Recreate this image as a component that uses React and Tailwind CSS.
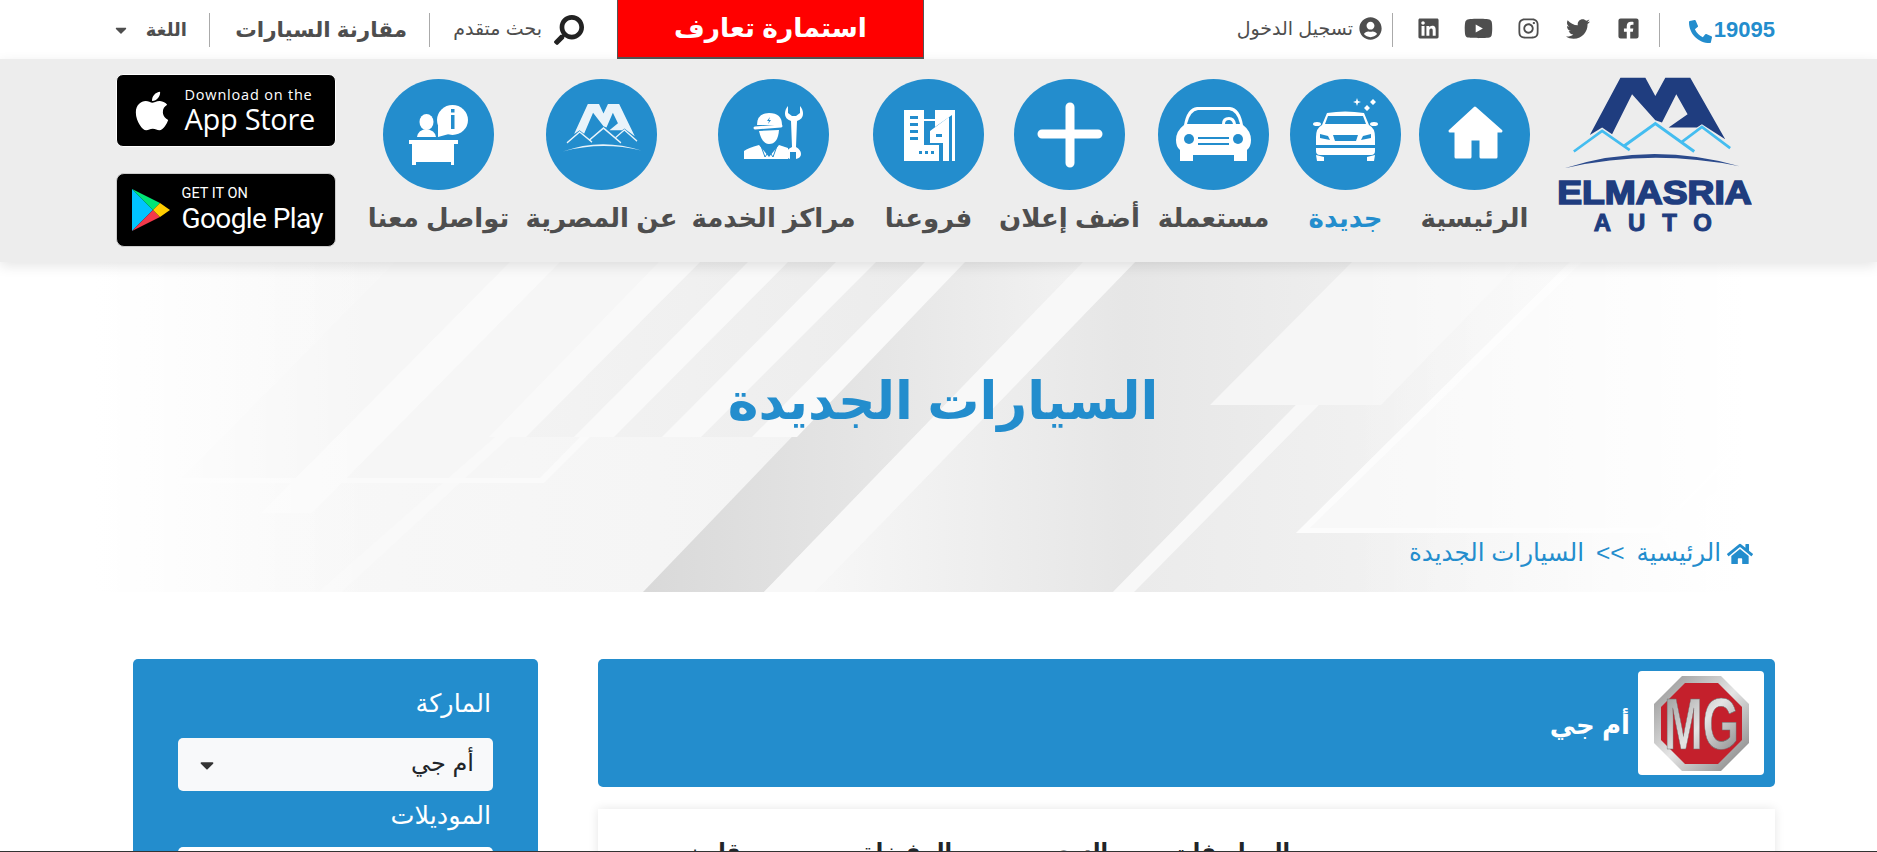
import React from 'react';
import {
  FaApple,
  FaCaretDown,
  FaFacebookSquare,
  FaHome,
  FaInstagram,
  FaLinkedin,
  FaPhoneAlt,
  FaSearch,
  FaTwitter,
  FaUserCircle,
  FaYoutube,
} from 'react-icons/fa';

const BLUE = '#238dcd';

const LogoMark = ({ dark = '#1f3d7f', light = '#44bdf0', arc = '#2b4a8c' }) => (
  <>
    <polygon
      fill={dark}
      points="148,222 240,50 315,50 345,105 375,50 450,50 555,235 485,190 470,200 385,200 442,160 408,100 365,185 345,178 275,100 215,220 185,200"
    />
    <polyline fill="none" stroke={light} strokeWidth="8" points="100,272 185,210 268,268" />
    <polyline fill="none" stroke={light} strokeWidth="9" points="250,256 345,188 462,272" />
    <polyline fill="none" stroke={light} strokeWidth="8" points="425,243 485,198 570,262" />
    <path fill={arc} d="M72 322 Q330 240 598 316 Q330 262 72 322Z" />
  </>
);

const Logo = () => (
  <svg viewBox="50 45 585 475" className="w-[195px] h-[158px]">
    <LogoMark />
    <text direction="ltr" x="50" y="430" textLength="585" lengthAdjust="spacingAndGlyphs" fontFamily="Liberation Sans" fontWeight="700" fontSize="102" fill="#1f3d7f" stroke="#1f3d7f" strokeWidth="5">ELMASRIA</text>
    <text direction="ltr" x="160" y="512" textLength="355" fontFamily="Liberation Sans" fontWeight="700" fontSize="72" fill="#1f3d7f" stroke="#1f3d7f" strokeWidth="3">AUTO</text>
  </svg>
);

const HomeIcon = () => (
  <path fill="#fff" stroke="#fff" strokeWidth="3" strokeLinejoin="round" d="M56 29 L82 52 L77 52 L77 78 L62 78 L62 60 L51 60 L51 78 L37 78 L37 52 L31 52Z" />
);

const NewCarIcon = () => (
  <>
    <path fill="#fff" d="M67 19l1 3 3 1-3 1-1 3-1-3-3-1 3-1zM83 20l3 3-3 3-3-3zM77 26l3 3-3 3-3-3z" />
    <path fill="#fff" d="M37 34 Q55 31 74 34 L79 46 Q85 49 85 58 L85 66 L26 66 L26 58 Q26 49 32 46Z" />
    <ellipse cx="27" cy="45" rx="4" ry="2" fill="#fff" />
    <ellipse cx="84" cy="45" rx="4" ry="2" fill="#fff" />
    <polygon fill={BLUE} points="38,37 73,37 76,45 35,45" />
    <path fill={BLUE} d="M30 55 L38 57 L40 61 L30 59Z M81 55 L73 57 L71 61 L81 59Z M43 56 L68 56 L66 62 L45 62Z" />
    <path fill="#fff" d="M26 69 L85 69 L85 72 Q85 76 81 76 L30 76 Q26 76 26 72Z" />
    <path fill="#fff" d="M26 76 L34 78 L34 82 L27 82Z M85 76 L77 78 L77 82 L84 82Z" />
  </>
);

const UsedCarIcon = () => (
  <>
    <path fill="#fff" d="M26 46 Q29 29 39 28 L72 28 Q82 29 85 46 Q93 52 93 61 Q93 68 89 71 L89 82 L76 82 L76 76 L35 76 L35 82 L22 82 L22 71 Q18 68 18 61 Q18 52 26 46Z" />
    <path fill={BLUE} d="M29 45 Q32 32 40 31 L71 31 Q79 32 82 45Z" />
    <path fill="#fff" d="M64 45 Q64 38 71 38 Q77 38 78 45 L75 45 Q74 41 71 41 Q67 41 67 45Z" />
    <circle cx="31" cy="60" r="5" fill={BLUE} />
    <circle cx="80" cy="60" r="5" fill={BLUE} />
    <rect x="40" y="58" width="31" height="2" fill={BLUE} />
    <rect x="40" y="64" width="31" height="2" fill={BLUE} />
  </>
);

const PlusIcon = () => (
  <path fill="none" stroke="#fff" strokeWidth="9" strokeLinecap="round" d="M56 28V84M28 55H84" />
);

const BranchesIcon = () => (
  <>
    <rect x="31" y="31" width="20" height="51" fill="#fff" />
    <path fill={BLUE} d="M37 37h8v3h-8zM37 44h8v3h-8zM37 51h8v3h-8zM37 58h8v3h-8z" />
    <rect x="51" y="40" width="11" height="2" fill="#fff" />
    <polygon fill="#fff" points="62,31 82,31 82,82 79,82 79,36 62,48" />
    <polygon fill="#fff" points="57,52 76,38 76,82 70,82 70,64 57,64" />
    <rect x="63" y="55" width="6" height="3" fill={BLUE} />
    <rect x="40" y="66" width="26" height="16" fill="#fff" />
    <path fill={BLUE} d="M46 72h3v3h-3zM52 72h3v3h-3zM58 72h3v3h-3z" />
  </>
);

const WorkerIcon = () => (
  <>
    <path fill="#fff" d="M39 46 Q39 34 51 34 Q64 34 64 46Z" />
    <path fill={BLUE} d="M52 38l-3 4h2l-1 3 3-4h-2z" />
    <path fill="none" stroke="#fff" strokeWidth="3" strokeLinecap="round" d="M37 49 L63 47" />
    <path fill="#fff" d="M41 52 L61 51 Q60 65 51 65 Q44 65 41 52Z" />
    <path fill="#fff" d="M26 80 L26 72 Q30 69 41 66 L51 78 L61 66 L70 69 L70 80Z" />
    <path fill="none" stroke={BLUE} strokeWidth="1" d="M43 67 L47 78 L51 72 L55 78 L59 67" />
    <path fill="#fff" d="M70 27 Q67 30 67 35 Q67 40 73 42 L74 68 Q68 71 68 75 Q68 79 72 80 L72 73 L78 73 L78 80 Q83 79 83 75 Q83 71 78 68 L79 42 Q85 40 85 35 Q85 30 82 27 L82 34 L78 37 L74 37 L70 34Z" />
  </>
);

const AboutIcon = () => (
  <svg x="15" y="24" width="82" height="50" viewBox="60 45 550 285" preserveAspectRatio="none">
    <g style={{ filter: 'blur(3px)' }} opacity="0.9">
      <LogoMark dark="#fff" light="#fff" arc="#fff" />
    </g>
  </svg>
);

const ContactIcon = () => (
  <>
    <ellipse cx="43.5" cy="43" rx="7" ry="8" fill="#fff" />
    <path fill="#fff" d="M34 58 Q35 51 43 50 Q52 51 53 58Z" />
    <rect x="26" y="61" width="49" height="4" fill="#fff" />
    <path fill="#fff" d="M29 65h42v21h-3v-3H33v3h-4z" />
    <ellipse cx="69.5" cy="41" rx="15.5" ry="15" fill="#fff" />
    <path fill="#fff" d="M55 46 L55 58 L66 55Z" />
    <rect x="68" y="36" width="3.5" height="14" fill={BLUE} />
    <rect x="68" y="30" width="3.5" height="3.5" fill={BLUE} />
  </>
);

const navItems = [
  { label: 'الرئيسية', width: 'w-[128px]', icon: <HomeIcon /> },
  { label: 'جديدة', width: 'w-[130px]', icon: <NewCarIcon />, active: true },
  { label: 'مستعملة', width: 'w-[134px]', icon: <UsedCarIcon /> },
  { label: 'أضف إعلان', width: 'w-[154px]', icon: <PlusIcon /> },
  { label: 'فروعنا', width: 'w-[128px]', icon: <BranchesIcon /> },
  { label: 'مراكز الخدمة', width: 'w-[182px]', icon: <WorkerIcon /> },
  { label: 'عن المصرية', width: 'w-[162px]', icon: <AboutIcon /> },
  { label: 'تواصل معنا', width: 'w-[164px]', icon: <ContactIcon /> },
];

const socialIcons = [
  <FaFacebookSquare key="facebook" className="text-[23px]" />,
  <FaTwitter key="twitter" className="text-[24px]" />,
  <FaInstagram key="instagram" className="text-[23px]" />,
  <FaYoutube key="youtube" className="text-[29px]" />,
  <FaLinkedin key="linkedin" className="text-[23px]" />,
];

const Divider = () => <span className="block w-px h-[34px] bg-[#aaa] shrink-0" />;

const TopBar = () => (
  <div className="flex items-center h-[59px] pr-[102px] text-[#4e4e4e] bg-white">
    <a dir="ltr" className="flex items-center justify-end gap-[2px] w-[115px] text-[22px] font-bold text-[#238dcd] font-['Liberation_Sans',sans-serif]">
      <FaPhoneAlt className="text-[23px] mt-1" />
      <span>19095</span>
    </a>
    <Divider />
    <div className="flex items-center mr-[6px] -mt-0.5">
      {socialIcons.map((icon) => (
        <span key={icon.key} className="flex justify-center w-[50px]">{icon}</span>
      ))}
    </div>
    <span className="mr-[10px]"><Divider /></span>
    <div className="flex items-center gap-[6px] w-[142px] mr-[10px] text-[19px] whitespace-nowrap">
      <FaUserCircle className="text-[23px] shrink-0 -mt-0.5" />
      <span>تسجيل الدخول</span>
    </div>
    <a className="flex items-center justify-center w-[307px] h-[59px] mr-[316px] bg-[#ff0000] border-b-2 border-x border-[#555] text-white text-[26.5px] font-bold whitespace-nowrap">
      استمارة تعارف
    </a>
    <div className="flex items-center gap-[12px] w-[130px] mr-[33px] whitespace-nowrap">
      <FaSearch className="text-[30px] text-[#222] -scale-x-100 shrink-0" />
      <span className="text-[19px]">بحث متقدم</span>
    </div>
    <span className="mr-[24px]"><Divider /></span>
    <span className="w-[173px] mr-[22px] mt-0.5 text-[21.5px] font-bold whitespace-nowrap">مقارنة السيارات</span>
    <span className="mr-[24px]"><Divider /></span>
    <span className="w-[51px] mr-[22px] mt-0.5 text-[18px] font-bold whitespace-nowrap">اللغة</span>
    <FaCaretDown className="mr-[6px] text-[18px]" />
  </div>
);

const AppStoreBadge = () => (
  <div dir="ltr" className="flex items-center w-[220px] h-[73px] rounded-[7px] bg-black border border-white text-white pl-[13px] gap-[11px] font-['Open_Sans',sans-serif]">
    <FaApple className="text-[44px] shrink-0" />
    <div className="flex flex-col leading-none">
      <span className="text-[14.5px] tracking-[0.8px]">Download on the</span>
      <span className="text-[29px] mt-[2px] tracking-[-0.3px]">App Store</span>
    </div>
  </div>
);

const GooglePlayBadge = () => (
  <div dir="ltr" className="flex items-center w-[220px] h-[74px] rounded-[8px] bg-black border border-[#ccc] text-white pl-[15px] gap-[12px] font-['Roboto',sans-serif]">
    <svg viewBox="0 0 38 42" className="w-[38px] h-[42px]">
      <polygon points="0,0 0,42 21,21" fill="#00c3ff" />
      <polygon points="0,0 21,21 28,14" fill="#00e676" />
      <polygon points="0,42 21,21 28,28" fill="#f2384a" />
      <polygon points="28,14 21,21 28,28 38,21" fill="#ffce00" />
    </svg>
    <div className="flex flex-col leading-none">
      <span className="text-[14.5px]">GET IT ON</span>
      <span className="text-[28px] mt-[3px] tracking-[-0.6px]">Google Play</span>
    </div>
  </div>
);

const NavBar = () => (
  <nav className="relative z-10 flex h-[203px] bg-[#ededed] pr-[125px] shadow-[0_4px_12px_rgba(0,0,0,0.1)]">
    <div className="w-[195px] ml-[18.5px] mt-[17px]">
      <Logo />
    </div>
    {navItems.map((item) => (
      <a key={item.label} className={`${item.width} flex flex-col items-center pt-[20px]`}>
        <svg viewBox="0 0 111 111" className="w-[111px] h-[111px] shrink-0">
          <circle cx="55.5" cy="55.5" r="55.5" fill={BLUE} />
          {item.icon}
        </svg>
        <span className={`mt-[14px] text-[26px] leading-[28px] font-bold whitespace-nowrap ${item.active ? 'text-[#238dcd]' : 'text-[#4e4e4e]'}`}>
          {item.label}
        </span>
      </a>
    ))}
    <div className="flex flex-col gap-[26px] mt-[15px] mr-[21px]">
      <AppStoreBadge />
      <GooglePlayBadge />
    </div>
  </nav>
);

const HeroBackground = () => (
  <svg viewBox="0 0 1877 330" preserveAspectRatio="none" className="absolute inset-0 w-full h-full">
    <defs>
      <linearGradient id="base">
        <stop offset="0" stopColor="#fafafa" />
        <stop offset="0.35" stopColor="#f5f5f5" />
        <stop offset="0.6" stopColor="#f0f0f0" />
        <stop offset="0.8" stopColor="#f8f8f8" />
        <stop offset="1" stopColor="#fcfcfc" />
      </linearGradient>
      <linearGradient id="darkBand">
        <stop offset="0" stopColor="#d9d9d9" />
        <stop offset="0.55" stopColor="#e6e6e6" />
        <stop offset="1" stopColor="#f2f2f2" />
      </linearGradient>
      <linearGradient id="rightBand">
        <stop offset="0" stopColor="#f7f7f7" />
        <stop offset="0.5" stopColor="#e6e6e6" />
        <stop offset="1" stopColor="#f1f1f1" />
      </linearGradient>
      <linearGradient id="lowerRight" x1="0" y1="0" x2="1" y2="0">
        <stop offset="0" stopColor="#ebebeb" />
        <stop offset="1" stopColor="#f8f8f8" />
      </linearGradient>
      <linearGradient id="upperLeft" x1="0" y1="0" x2="1" y2="0">
        <stop offset="0" stopColor="#f3f3f3" />
        <stop offset="1" stopColor="#ebebeb" />
      </linearGradient>
      <linearGradient id="edgeFade">
        <stop offset="0.05" stopColor="#fff" stopOpacity="1" />
        <stop offset="0.2" stopColor="#fff" stopOpacity="0" />
        <stop offset="0.72" stopColor="#fff" stopOpacity="0" />
        <stop offset="0.93" stopColor="#fff" stopOpacity="1" />
      </linearGradient>
    </defs>
    <rect width="1877" height="330" fill="url(#base)" />
    <polygon points="180,218 395,0 700,0 490,218" fill="#f6f6f6" />
    <polygon points="520,175 700,0 980,0 800,175" fill="url(#upperLeft)" />
    <polygon points="643,330 960,0 1083,0 764,330" fill="url(#darkBand)" />
    <polygon points="815,330 1113,330 1436,0 1135,0" fill="url(#rightBand)" />
    <polygon points="1134,330 1460,0 1570,0 1296,271 1660,271 1700,330" fill="url(#lowerRight)" />
    <polygon points="764,330 815,330 1135,0 1083,0" fill="#f8f8f8" />
    <polygon points="1113,330 1134,330 1460,0 1436,0" fill="#f8f8f8" />
    <polygon points="1210,143 1352,0 1520,0 1381,143" fill="#f6f6f6" />
    <polygon points="1310,266 1582,0 1877,0 1877,140 1652,266" fill="#f8f8f8" />
    <polygon points="1296,271 1570,0 1582,0 1310,266 1657,266 1747,175 1751,175 1657,271" fill="#fcfcfc" />
    <polygon points="261,251 312,251 560,0 510,0" fill="#fafafa" />
    <polygon points="489,175 526,175 700,0 659,0" fill="#f9f9f9" />
    <polygon points="574,175 614,175 788,0 748,0" fill="#f9f9f9" />
    <polygon points="662,175 701,175 876,0 836,0" fill="#f9f9f9" />
    <polygon points="752,175 797,175 965,0 925,0" fill="#f9f9f9" />
    <polygon points="318,330 342,330 510,175 495,175" fill="#f9f9f9" />
    <polygon points="180,216 540,216 580,175 590,175 544,221 180,221" fill="#fafafa" />
    <rect width="1877" height="330" fill="url(#edgeFade)" />
  </svg>
);

const Hero = () => (
  <section className="relative h-[330px] text-[#238dcd]">
    <HeroBackground />
    <div className="relative flex flex-col h-full">
      <h1 className="mt-[100px] pl-[9px] text-center text-[52px] font-bold">السيارات الجديدة</h1>
      <div className="flex items-center gap-[6px] mt-auto mb-[20px] pr-[124px] text-[24.5px]">
        <FaHome className="text-[26px]" />
        <span>الرئيسية</span>
        <span className="mx-[6px]">&gt;&gt;</span>
        <span>السيارات الجديدة</span>
      </div>
    </div>
  </section>
);

const MgLogo = () => (
  <svg viewBox="0 0 95 95" className="w-[95px] h-[95px]">
    <defs>
      <linearGradient id="chrome" x1="0" y1="0" x2="1" y2="1">
        <stop offset="0" stopColor="#8f8f8f" />
        <stop offset="0.5" stopColor="#e4e4e4" />
        <stop offset="1" stopColor="#7c7c7c" />
      </linearGradient>
    </defs>
    <polygon points="28,0 67,0 95,28 95,67 67,95 28,95 0,67 0,28" fill="url(#chrome)" />
    <polygon points="31,7 64,7 88,31 88,64 64,88 31,88 7,64 7,31" fill="#c4202c" />
    <text direction="ltr" x="10" y="73" textLength="75" lengthAdjust="spacingAndGlyphs" fontFamily="Liberation Sans" fontWeight="700" fontSize="72" fill="url(#chrome)" stroke="#6f6f6f" strokeWidth="0.6">MG</text>
  </svg>
);

const BrandSelect = ({ value, className }) => (
  <div className={`flex items-center justify-between w-[315px] rounded-[5px] pr-[19px] pl-[18px] text-[24px] text-[#212529] ${className}`}>
    <span className="pb-[4px]">{value}</span>
    <FaCaretDown className="text-[22px] text-[#333]" />
  </div>
);

const Content = () => (
  <section className="flex gap-[60px] pt-[67px] pr-[102px] pl-[133px]">
    <div className="w-[1177px] shrink-0">
      <div className="flex items-center h-[128px] rounded-[5px] bg-[#238dcd] pr-[11px]">
        <div className="flex items-center justify-center w-[126px] h-[104px] rounded-[4px] bg-white">
          <MgLogo />
        </div>
        <span className="mr-[8px] mt-[5px] text-[26px] font-bold text-white">أم جي</span>
      </div>
      <div className="mt-[22px] h-[200px] bg-white shadow-[0_0_10px_rgba(0,0,0,0.1)]">
        <div className="flex pt-[26px] pr-[485px] text-[22px] font-bold text-[#212529]">
          <span className="w-[182px]">المواصفات</span>
          <span className="w-[156px]">السعر</span>
          <span className="w-[211px]">المفضلة</span>
          <span>قارن</span>
        </div>
      </div>
    </div>
    <aside className="w-[405px] h-[400px] shrink-0 rounded-[5px] bg-[#238dcd] pt-[28px] pr-[45px] text-white">
      <div className="text-[25.5px] pr-[2px] leading-[33px]">الماركة</div>
      <BrandSelect value="أم جي" className="mt-[18px] h-[53px] bg-[#f8f9fa]" />
      <div className="text-[25.5px] pr-[2px] mt-[8px] leading-[33px]">الموديلات</div>
      <BrandSelect value="" className="mt-[15px] h-[53px] bg-white" />
    </aside>
  </section>
);

const App = () => (
  <div dir="rtl" className="h-screen overflow-hidden bg-white border-b border-[#333] font-['Liberation_Sans','DejaVu_Sans',sans-serif]">
    <TopBar />
    <NavBar />
    <Hero />
    <Content />
  </div>
);

export default App;
